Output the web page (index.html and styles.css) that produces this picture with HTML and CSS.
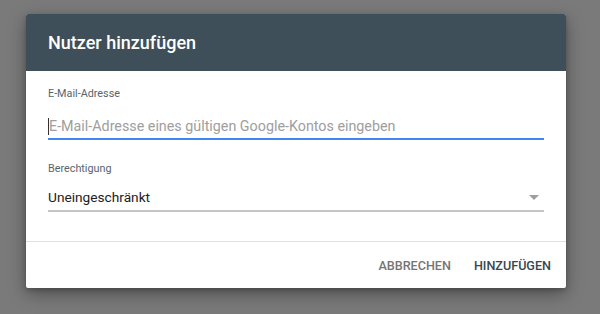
FILE: index.html
```html
<!DOCTYPE html>
<html lang="de">
<head>
<meta charset="utf-8">
<link rel="stylesheet" href="styles.css">
</head>
<body>
<div class="dialog">
  <div class="header">Nutzer hinzufügen</div>
  <div class="content">
    <div class="field">
      <div class="label">E-Mail-Adresse</div>
      <div class="input focused"><span class="caret"></span><span class="placeholder">E-Mail-Adresse eines gültigen Google-Kontos eingeben</span></div>
    </div>
    <div class="field">
      <div class="label">Berechtigung</div>
      <div class="input select"><span class="value">Uneingeschränkt</span><span class="arrow"></span></div>
    </div>
  </div>
  <div class="actions">
    <span class="btn cancel">ABBRECHEN</span>
    <span class="btn primary">HINZUFÜGEN</span>
  </div>
</div>
</body>
</html>
```
FILE: styles.css
```css
html, body {
  margin: 0;
  padding: 0;
  background: #7a7a7a;
  width: 600px;
  height: 314px;
  overflow: hidden;
  font-family: Roboto, "Liberation Sans", sans-serif;
}
.dialog {
  margin: 14px 0 0 26px;
  width: 540px;
  height: 274px;
  background: #fff;
  border-radius: 2px;
  box-shadow: 0 6px 18px rgba(0,0,0,0.35), 0 2px 5px rgba(0,0,0,0.2);
  display: flex;
  flex-direction: column;
  overflow: hidden;
}
.header {
  height: 57px;
  background: #3e4f59;
  color: #fff;
  font-size: 18px;
  font-weight: 500;
  padding-left: 22px;
  display: flex;
  align-items: center;
}
.content {
  padding: 16px 22px 0 22px;
  height: 154px;
  border-bottom: 1px solid #e0e0e0;
  display: flex;
  flex-direction: column;
  gap: 22px;
}
.label {
  font-size: 10.8px;
  color: #56656d;
  line-height: 14px;
}
.input {
  margin-top: 13px;
  height: 25px;
  display: flex;
  align-items: center;
  line-height: 20px;
  position: relative;
}
.input.focused {
  border-bottom: 2px solid #4285f4;
  height: 24px;
  font-size: 14.3px;
}
.caret {
  width: 1px;
  height: 17px;
  background: #333;
}
.placeholder {
  color: #9e9e9e;
}
.select {
  margin-top: 8px;
  justify-content: space-between;
  border-bottom: 2px solid #c4c4c4;
  height: 26px;
  font-size: 13.7px;
}
.value {
  color: #212121;
}
.arrow {
  width: 0;
  height: 0;
  border-left: 5px solid transparent;
  border-right: 5px solid transparent;
  border-top: 5px solid #9e9e9e;
  margin-right: 5px;
}
.actions {
  flex: 1;
  display: flex;
  justify-content: flex-end;
  align-items: center;
  padding-right: 15px;
  gap: 23px;
  font-size: 12.6px;
  font-weight: 500;
}
.btn.cancel { color: #757575; }
.btn.primary { color: #37474f; }
```
